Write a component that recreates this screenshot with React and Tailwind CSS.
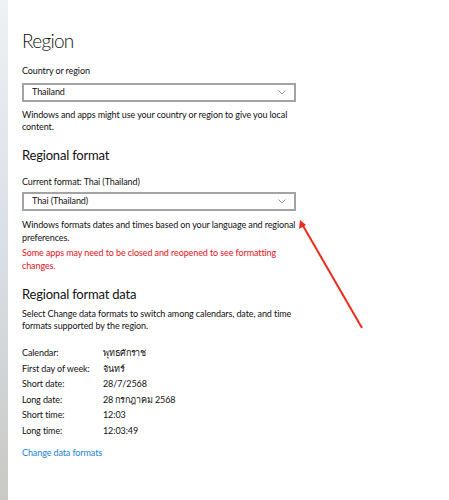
import React from "react";

const rows = [
  ["Calendar:", "พุทธศักราช"],
  ["First day of week:", "จันทร์"],
  ["Short date:", "28/7/2568"],
  ["Long date:", "28 กรกฎาคม 2568"],
  ["Short time:", "12:03"],
  ["Long time:", "12:03:49"],
];

function Chevron() {
  return (
    <svg width="8" height="5" viewBox="0 0 8 5" className="text-[#777]">
      <path d="M0.5 0.5 L4 4 L7.5 0.5" fill="none" stroke="currentColor" strokeWidth="0.8" />
    </svg>
  );
}

function Select({ value }) {
  return (
    <div className="flex items-center justify-between w-[274px] h-[19px] border-2 border-[#a3a3a3] bg-white pl-[8px] pr-[8px]">
      <span>{value}</span>
      <Chevron />
    </div>
  );
}

export default function App() {
  return (
    <div
      className="relative flex w-[449px] h-[500px] bg-white text-[#111] text-[9px] leading-[12.5px] tracking-[-0.1px] overflow-hidden"
      style={{ fontFamily: 'Lato, "Noto Sans", sans-serif' }}
    >
      {/* window edge */}
      <div className="w-[8px] h-full bg-gradient-to-b from-[#eef1f5] via-[#d9dfe7] to-[#c9c9c4]" />

      <div className="flex-1 pl-[14px]">
        <h1 className="mt-[29px] text-[19px] leading-[24px] font-light tracking-[-0.7px] text-[#111]">Region</h1>

        <div className="mt-[12px]">Country or region</div>
        <div className="mt-[5px]">
          <Select value="Thailand" />
        </div>
        <p className="mt-[7px] whitespace-nowrap">
          Windows and apps might use your country or region to give you local
          <br />
          content.
        </p>

        <h2 className="mt-[12px] text-[13px] leading-[18px] tracking-[-0.2px]">Regional format</h2>
        <div className="mt-[12px]">Current format: Thai (Thailand)</div>
        <div className="mt-[4px]">
          <Select value="Thai (Thailand)" />
        </div>
        <p className="mt-[7px] whitespace-nowrap leading-[13px]">
          Windows formats dates and times based on your language and regional
          <br />
          preferences.
        </p>
        <p className="mt-[2px] whitespace-nowrap leading-[13px] text-[#e81123]">
          Some apps may need to be closed and reopened to see formatting
          <br />
          changes.
        </p>

        <h2 className="mt-[13px] text-[13px] leading-[18px] tracking-[-0.2px]">Regional format data</h2>
        <p className="mt-[5px] whitespace-nowrap leading-[11.5px]">
          Select Change data formats to switch among calendars, date, and time
          <br />
          formats supported by the region.
        </p>

        <div className="mt-[16px] flex flex-col gap-[3px]">
          {rows.map(([k, v]) => (
            <div key={k} className="flex">
              <span className="w-[81px]">{k}</span>
              <span>{v}</span>
            </div>
          ))}
        </div>

        <div className="mt-[10px] text-[#1a83d6]">Change data formats</div>
      </div>

      {/* annotation arrow */}
      <svg className="absolute left-0 top-0 pointer-events-none" width="449" height="500">
        <line x1="362" y1="328" x2="302" y2="224" stroke="#ee2a1b" strokeWidth="2" />
        <polygon points="300,220 299,229 306,225" fill="#ee2a1b" />
      </svg>
    </div>
  );
}
